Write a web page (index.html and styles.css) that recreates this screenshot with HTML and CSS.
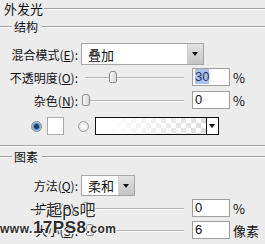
FILE: index.html
```html
<!DOCTYPE html>
<html lang="zh">
<head>
    <meta charset="UTF-8">
    <title>外发光</title>
    <link rel="stylesheet" href="styles.css">
</head>
<body>
    <div class="panel">
        <div class="legend legend-top"><span>外发光</span></div>
        <div class="legend legend-group"><span>结构</span></div>

        <div class="row row-blend">
            <label class="lbl">混合模式(<u>E</u>):</label>
            <div class="select select-blend">
                <span class="select-text">叠加</span>
                <span class="select-btn"></span>
            </div>
        </div>

        <div class="row row-opacity">
            <label class="lbl">不透明度(<u>O</u>):</label>
            <div class="slider"><span class="thumb" style="left: 27px"></span></div>
            <div class="num"><span class="sel">30</span></div>
            <span class="unit">%</span>
        </div>

        <div class="row row-noise">
            <label class="lbl">杂色(<u>N</u>):</label>
            <div class="slider"><span class="thumb" style="left: 0px"></span></div>
            <div class="num">0</div>
            <span class="unit">%</span>
        </div>

        <div class="row row-color">
            <span class="radio checked"></span>
            <span class="swatch"></span>
            <span class="radio radio-2"></span>
            <div class="gradient">
                <span class="gradient-fill"></span>
                <span class="gradient-btn"></span>
            </div>
        </div>

        <div class="sep"></div>
        <div class="legend legend-group legend-elements"><span>图素</span></div>

        <div class="row row-method">
            <label class="lbl">方法(<u>Q</u>):</label>
            <div class="select select-method">
                <span class="select-text">柔和</span>
                <span class="select-btn"></span>
            </div>
        </div>

        <div class="row row-spread">
            <label class="lbl">扩展(<u>P</u>):</label>
            <div class="slider"><span class="thumb" style="left: 0px"></span></div>
            <div class="num">0</div>
            <span class="unit">%</span>
        </div>

        <div class="row row-size">
            <label class="lbl">大小(<u>S</u>):</label>
            <div class="slider"><span class="thumb" style="left: 4px"></span></div>
            <div class="num">6</div>
            <span class="unit">像素</span>
        </div>

        <div class="watermark wm-cn">一起ps吧</div>
        <div class="watermark wm-url"><span class="wm-small">www.</span><span class="wm-big">17PS8</span><span class="wm-small">.com</span></div>
    </div>
</body>
</html>
```

FILE: styles.css
```css
body {
    margin: 0;
    background-color: #ececec;
    font-family: "Noto Sans CJK SC", "Liberation Sans", sans-serif;
    font-size: 12px;
    color: #111;
}

.panel {
    position: relative;
    width: 265px;
    height: 244px;
    padding-top: 1px;
    box-sizing: border-box;
    overflow: hidden;
}

/* group headers with etched lines */
.legend {
    display: flex;
    align-items: center;
    height: 16px;
    line-height: 16px;
}

.legend::before,
.legend::after,
.sep {
    content: "";
    height: 0;
    border-top: 1px solid #a2a2a2;
    border-bottom: 1px solid #fbfbfb;
}

.legend::after {
    flex: 1;
}

.legend-top {
    height: 15px;
    font-size: 13px;
}
.legend-top::before {
    width: 0;
    border: none;
}
.legend-top span {
    padding: 0 1px 0 4px;
}

.legend-group {
    margin-top: 3px;
}
.legend-group::before {
    width: 12px;
}
.legend-group span {
    padding: 0 4px 0 2px;
}

.legend-elements {
    margin-top: 2px;
}

.sep {
    margin-top: 10px;
}

/* form rows */
.row {
    display: flex;
    align-items: center;
    height: 18px;
}

.lbl {
    width: 78px;
    text-align: right;
    white-space: nowrap;
}

.row-blend { margin-top: 8px; height: 22px; }
.row-opacity { margin-top: 3px; }
.row-noise { margin-top: 5px; }
.row-color { margin-top: 8px; padding-left: 31px; }
.row-method { margin-top: 10px; height: 21px; }
.row-spread { margin-top: 3px; }
.row-size { margin-top: 4px; }

/* dropdowns */
.select {
    display: flex;
    align-items: stretch;
    height: 100%;
    margin-left: 3px;
    box-sizing: border-box;
    border: 1px solid #a5a5a5;
    background: #fff;
}

.select-blend { width: 123px; }
.select-method { width: 54px; }

.select-text {
    flex: 1;
    padding-left: 6px;
    display: flex;
    align-items: center;
    font-size: 13px;
}

.select-btn {
    position: relative;
    width: 15px;
    border-left: 1px solid #d0d0d0;
    background: linear-gradient(#e2e2e2, #c4c4c4);
}

.select-btn::after {
    content: "";
    position: absolute;
    left: 4px;
    top: 50%;
    margin-top: -2px;
    border-left: 3px solid transparent;
    border-right: 3px solid transparent;
    border-top: 4px solid #111;
}

/* sliders */
.slider {
    position: relative;
    width: 102px;
    height: 100%;
    margin-left: 4px;
}

.slider::before {
    content: "";
    position: absolute;
    left: 3px;
    right: 0;
    top: 50%;
    border-top: 1px solid #b4b4b4;
    border-bottom: 1px solid #f8f8f8;
}

.thumb {
    position: absolute;
    top: 3px;
    width: 6px;
    height: 10px;
    border: 1px solid #8c8c8c;
    border-radius: 3px 3px 2px 2px;
    background: linear-gradient(90deg, #fafafa, #d6d6d6);
}

/* numeric fields */
.num {
    width: 38px;
    height: 100%;
    margin-left: 8px;
    box-sizing: border-box;
    border: 1px solid #9f9f9f;
    background: #fff;
    padding-left: 2px;
    line-height: 16px;
    font-family: "Liberation Sans", sans-serif;
    font-size: 13px;
}

.sel {
    background: #a9c3e8;
    color: #1b3470;
}

.unit {
    margin-left: 3px;
    font-size: 13px;
}

/* color row */
.radio {
    width: 9px;
    height: 9px;
    border: 1px solid #9a9a9a;
    border-radius: 50%;
    background: radial-gradient(#fdfdfd, #dedede);
}

.radio.checked {
    background: radial-gradient(circle, #1e3f66 0 2px, #5f8fc0 3px, #d4e2ef 5px);
    border-color: #7d8da0;
}

.radio-2 {
    margin-left: 14px;
}

.swatch {
    width: 15px;
    height: 16px;
    margin-left: 5px;
    border: 1px solid #a8a8a8;
    background: #fff;
}

.gradient {
    display: flex;
    height: 18px;
    margin-left: 6px;
    box-sizing: border-box;
    border: 1px solid #111;
    background: #fff;
}

.gradient-fill {
    width: 110px;
    background:
        linear-gradient(90deg, #fff 10%, rgba(255, 255, 255, 0.2)),
        repeating-conic-gradient(#d6d6d6 0 25%, #fff 0 50%) 0 0 / 10px 10px;
}

.gradient-btn {
    position: relative;
    width: 11px;
    border-left: 1px solid #111;
    background: #fff;
}

.gradient-btn::after {
    content: "";
    position: absolute;
    left: 2px;
    top: 6px;
    border-left: 3px solid transparent;
    border-right: 3px solid transparent;
    border-top: 4px solid #111;
}

/* watermark over the lower rows */
.watermark {
    position: absolute;
    color: #2c2c2c;
    text-shadow: 1px 1px 0 #fff, -1px 0 0 #f4f4f4;
    white-space: nowrap;
}

.wm-cn {
    left: 30px;
    top: 199px;
    font-size: 16px;
    line-height: 20px;
}

.wm-url {
    left: 0;
    top: 220px;
    font-family: "Liberation Sans", sans-serif;
    font-weight: bold;
    line-height: 16px;
}

.wm-small {
    font-size: 12px;
    letter-spacing: 0.5px;
}

.wm-big {
    font-size: 17px;
    letter-spacing: 0.5px;
}
```
